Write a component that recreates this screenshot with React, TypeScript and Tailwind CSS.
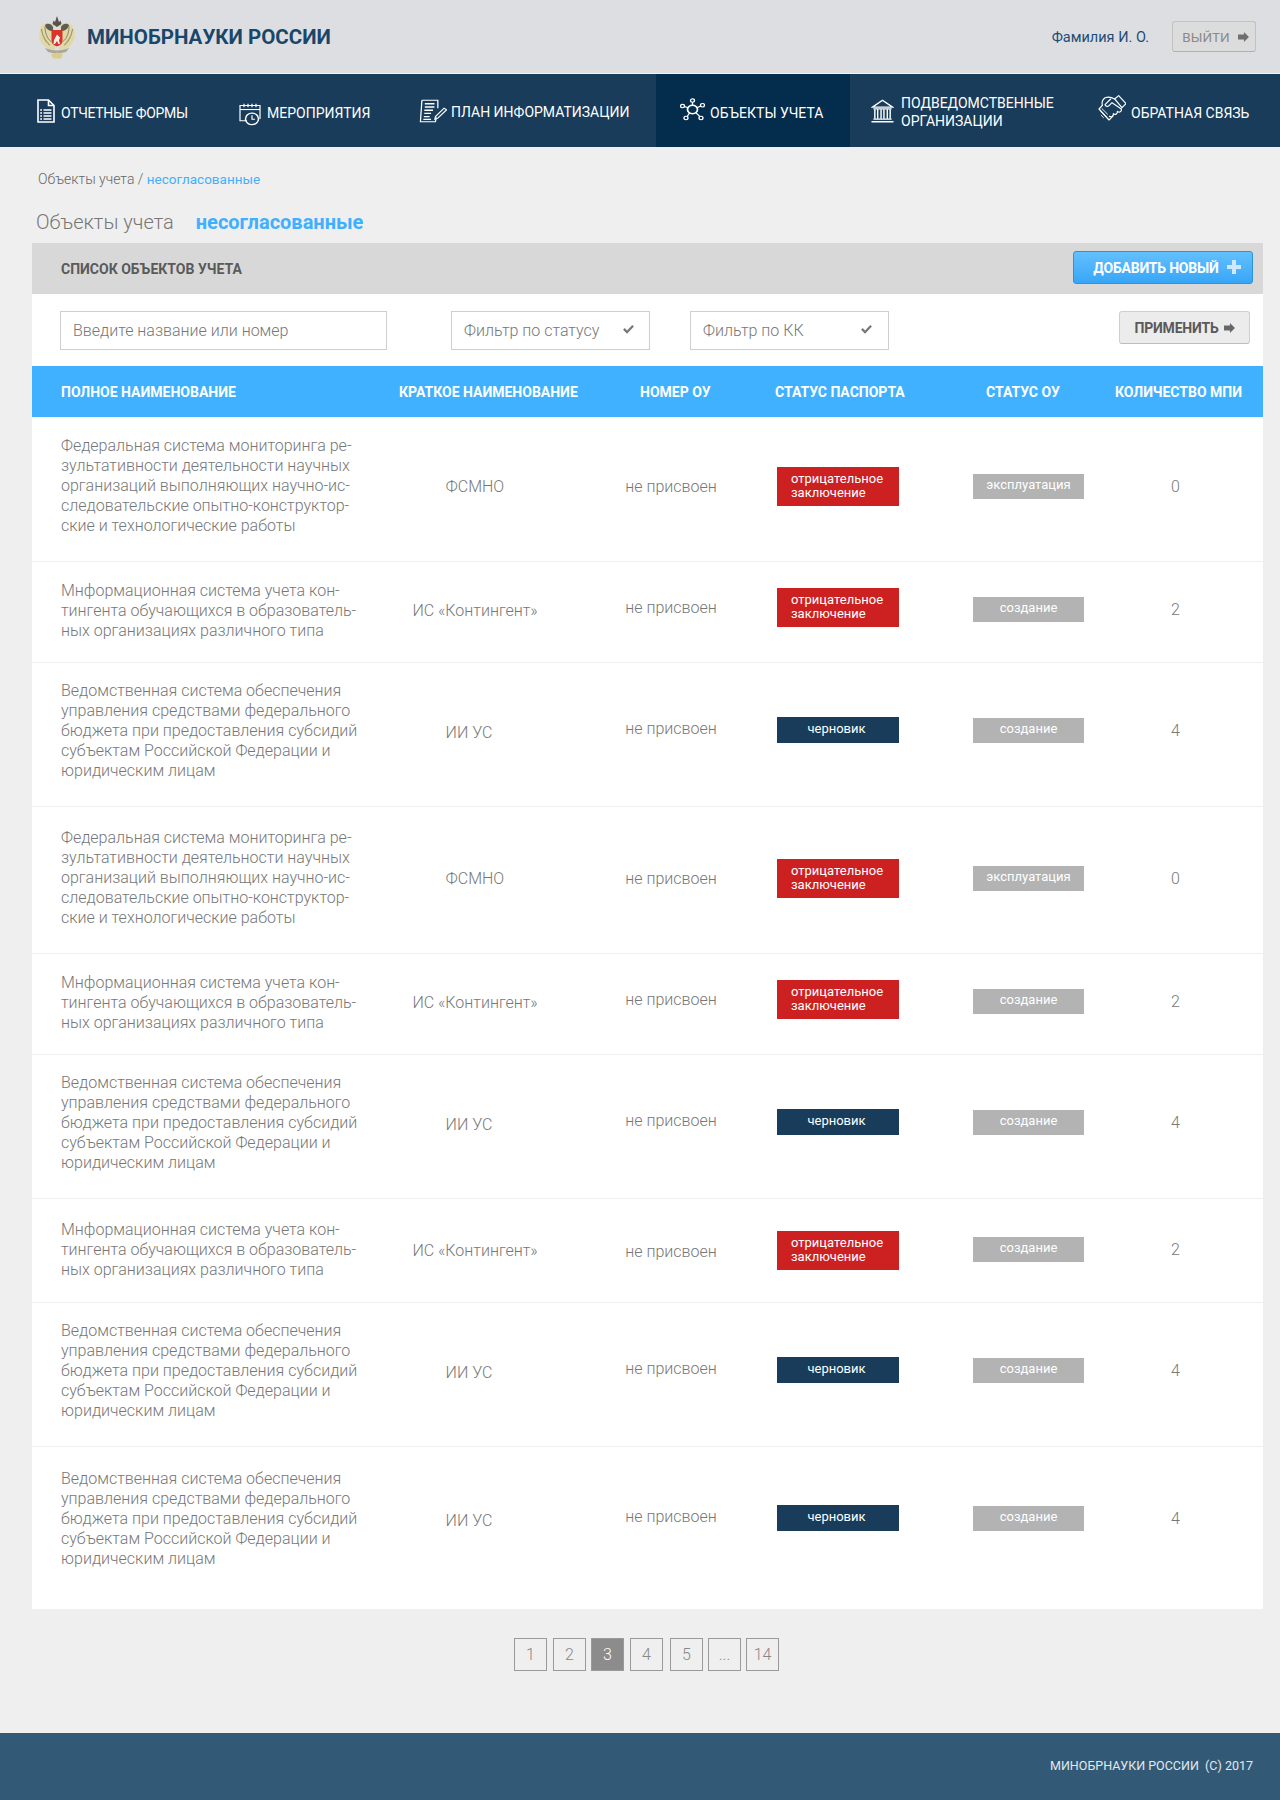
import React from 'react';

const fsmno = ['Федеральная система мониторинга ре-', 'зультативности деятельности научных', 'организаций выполняющих научно-ис-', 'следовательские опытно-конструктор-', 'ские и технологические работы'];
const kont = ['Мнформационная система учета кон-', 'тингента обучающихся в образователь-', 'ных организациях различного типа'];
const vedom = ['Ведомственная система обеспечения', 'управления средствами федерального', 'бюджета при предоставления субсидий', 'субъектам Российской Федерации и', 'юридическим лицам'];

// top offsets of every cell differ per row type, same as in the picture
const layouts = {
    long: { text: 'pt-[19px]', short: 'pt-[60px]', num: 'pt-[60px]', badge: 'pt-[50px]', status: 'pt-[57px]', qty: 'pt-[60px]' },
    mid: { text: 'pt-[19px]', short: 'pt-[39px]', num: 'pt-[36px]', badge: 'pt-[26px]', status: 'pt-[35px]', qty: 'pt-[38px]' },
    midLow: { text: 'pt-[21px]', short: 'pt-[42px]', num: 'pt-[43px]', badge: 'pt-[32px]', status: 'pt-[38px]', qty: 'pt-[41px]' },
    draft: { text: 'pt-[18px]', short: 'pt-[60px]', num: 'pt-[56px]', badge: 'pt-[54px]', status: 'pt-[55px]', qty: 'pt-[58px]' },
};

const rows = [
    { lines: fsmno, short: 'ФСМНО', status: 'эксплуатация', qty: 0, layout: layouts.long, box: 'h-[145px]', negative: true },
    { lines: kont, short: 'ИС «Контингент»', status: 'создание', qty: 2, layout: layouts.mid, box: 'h-[101px]', negative: true },
    { lines: vedom, short: 'ИИ УС', status: 'создание', qty: 4, layout: layouts.draft, box: 'h-[144px]', negative: false },
    { lines: fsmno, short: 'ФСМНО', status: 'эксплуатация', qty: 0, layout: layouts.long, box: 'h-[147px] pt-[2px]', negative: true },
    { lines: kont, short: 'ИС «Контингент»', status: 'создание', qty: 2, layout: layouts.mid, box: 'h-[101px]', negative: true },
    { lines: vedom, short: 'ИИ УС', status: 'создание', qty: 4, layout: layouts.draft, box: 'h-[144px]', negative: false },
    { lines: kont, short: 'ИС «Контингент»', status: 'создание', qty: 2, layout: layouts.midLow, box: 'h-[104px]', negative: true },
    { lines: vedom, short: 'ИИ УС', status: 'создание', qty: 4, layout: layouts.draft, box: 'h-[144px]', negative: false },
    { lines: vedom, short: 'ИИ УС', status: 'создание', qty: 4, layout: layouts.draft, box: 'h-[162px] pt-[4px]', negative: false, last: true },
];

const pages = [
    { label: '1', ml: '' },
    { label: '2', ml: 'ml-[6px]' },
    { label: '3', ml: 'ml-[5px]' },
    { label: '4', ml: 'ml-[6px]' },
    { label: '5', ml: 'ml-[7px]' },
    { label: '...', ml: 'ml-[5px]' },
    { label: '14', ml: 'ml-[5px]' },
];

const gridCols = 'grid grid-cols-[340px_206px_186px_196px_124px_179px]';

const Arrow = ({ className }: { className?: string }) => (
    <svg viewBox="0 0 12 11" className={className} fill="currentColor">
        <path d="M0 2.800h6.500V0L12 5.500 6.500 11V8.200H0z" />
    </svg>
);

const Check = () => (
    <svg viewBox="0 0 12 10" className="w-[11px] h-[9px] text-[#777]" fill="currentColor">
        <path d="M0 5.200l1.800-1.800 2.600 2.600L10.200 0 12 1.800 4.400 9.600z" />
    </svg>
);

const Emblem = () => (
    <svg viewBox="0 0 38 44" className="w-[38px] h-[44px]">
        <path d="M16 10C10 6 4 8 2 14c-2 7 0 14 5 18 3 2 7 3 10 3z" fill="#e0d8a8" />
        <path d="M22 10c6-4 12-2 14 4 2 7 0 14-5 18-3 2-7 3-10 3z" fill="#e0d8a8" />
        <path d="M3.500 14c1 6 3 12 8 16M7 11.500c0 6 2 12 6 15M34.500 14c-1 6-3 12-8 16M31 11.500c0 6-2 12-6 15" fill="none" stroke="#8c8868" strokeWidth="1" />
        <path d="M5 20c2 4 4 7 7 10M33 20c-2 4-4 7-7 10" fill="none" stroke="#b3a868" strokeWidth="1" />
        <path d="M15 12c-2-4-6-4-8-2 1 4 4 6 8 6zM23 12c2-4 6-4 8-2-1 4-4 6-8 6z" fill="#5f5d50" />
        <path d="M14.500 9l1-3.500 1.500 1.500L19 1l2 6 1.500-1.500 1 3.500L19 12z" fill="#57554c" />
        <path d="M13.500 15h11v11c0 3-3 4.500-5.500 5.500-2.500-1-5.500-2.500-5.500-5.500z" fill="#d8352a" />
        <path d="M16 25l3-5.500 3 3-1 3 1 3.500h-1.500l-1.500-3-2 3h-1.500z" fill="#f4efe3" />
        <path d="M7 33c4 1.500 8 2.500 12 2.500s8-1 12-2.500l-3 4c-3 1-6 1.200-9 1.200s-6-.2-9-1.200z" fill="#a9a69a" />
        <path d="M13 39l6-1.500 6 1.500-2 4.500h-8z" fill="#d9cd8e" />
    </svg>
);

const DocIcon = () => (
    <svg viewBox="0 0 18 24" className="w-[18px] h-[24px]" fill="none" stroke="white" strokeWidth="1.600">
        <path d="M1 1h10.500L17 6.500V23H1z" />
        <path d="M11.500 1v5.500H17" />
        <path d="M6.500 11H14.500M6.500 14H14.500M6.500 17H14.500M6.500 20H14.500M3.200 11H5M3.200 14H5M3.200 17H5M3.200 20H5" strokeWidth="1.300" />
    </svg>
);

const CalendarIcon = () => (
    <svg viewBox="0 0 22 27" preserveAspectRatio="none" className="w-[22px] h-[24px] mt-[6px]" fill="none" stroke="white" strokeWidth="1.200">
        <path d="M8 21H1V4h20v15" />
        <path d="M1 8.500h20" />
        <path d="M5 2v4M9 2v4M13 2v4M17 2v4" />
        <circle cx="13" cy="19" r="6.500" strokeWidth="1.500" />
        <path d="M13 15v4.500h3" />
    </svg>
);

const PlanIcon = () => (
    <svg viewBox="0 0 29 30" preserveAspectRatio="none" className="w-[28px] h-[24px]" fill="none" stroke="white" strokeWidth="1.300">
        <path d="M3 1.500h16.500v10M18 23l-1 5.500H1.500l1.500-27" />
        <path d="M6 6h10M6 10h10M5.500 14h9M5.500 18h7M5 22h6M4.500 25.500h8" strokeWidth="1.700" />
        <path d="M17 22l9-10.500 2.500 2L19.500 24l-3 1.500z" />
    </svg>
);

const NetworkIcon = () => (
    <svg viewBox="0 0 25 27" preserveAspectRatio="none" className="w-[25px] h-[23px] mb-[3px]" fill="none" stroke="white" strokeWidth="1.300">
        <circle cx="12.500" cy="13.500" r="5" strokeWidth="1.700" />
        <circle cx="12.500" cy="3" r="2" />
        <circle cx="2.500" cy="9.500" r="2" />
        <circle cx="22.500" cy="8.500" r="2" />
        <circle cx="6" cy="23.500" r="2" />
        <circle cx="21" cy="23.500" r="2" />
        <path d="M12.500 5v3.500M4.500 10l3.500 1.500M20.700 9.500L17 11.500M7 22l2.500-4.500M20 22l-4-4.500" />
    </svg>
);

const BankIcon = () => (
    <svg viewBox="0 0 24 28" preserveAspectRatio="none" className="w-[23px] h-[24px]" fill="none" stroke="white">
        <path d="M12 1.500L1.500 9.500h21z" strokeWidth="1.500" />
        <path d="M2.500 11.500h19M2.500 23.500h19M0.500 26.500h23" strokeWidth="1.700" />
        <path d="M4 12v11M7 12v11M10.500 12v11M13.500 12v11M17 12v11M20 12v11" strokeWidth="1.500" />
    </svg>
);

const HandshakeIcon = () => (
    <svg viewBox="0 0 84 78" className="w-[28px] h-[26px] mb-[6px]" fill="none" stroke="white" strokeWidth="3.500" strokeLinejoin="round" strokeLinecap="round">
        <path d="M50 12L62 2l22 24-12 12z" />
        <path d="M50 12C40 6 28 5 20 9c-7 6-9 14-7 22" />
        <path d="M38 12L21 29c3 7 9 6 13 2l8-8 28 19" />
        <path d="M13 31L3 42l30 33 11-11" />
        <path d="M70 42c2 8-6 12-12 7M58 49c1 8-6 12-12 7M46 56c1 8-6 12-12 8" />
        <path d="M9 49l24 0M15 57l20 0M22 65l10 0" strokeWidth="2.500" transform="rotate(45 20 56) translate(-6 2)" />
    </svg>
);

const App = () => {
    return (
        <div className="font-[Roboto,sans-serif] bg-[#efefef] min-h-[1800px] flex flex-col">
            {/* top bar */}
            <header className="h-[74px] bg-[#dddee2] border-b border-[#f4f4f4] flex items-center pl-[38px] pr-[24px]">
                <Emblem />
                <div className="ml-[11px] text-[20.500px] leading-[28px] font-bold text-[#19466b]">МИНОБРНАУКИ РОССИИ</div>
                <div className="ml-auto mt-[2px] text-[14.500px] text-[#1d4d75]">Фамилия И. О.</div>
                <button className="ml-[23px] w-[84px] h-[31px] pl-[3px] flex items-center justify-center gap-[8px] bg-[#dcdcdc] border border-[#c2c2c2] border-b-[#b0b0b0] rounded-[3px] text-[13.500px] text-[#8a8a8a]">
                    <span className="mt-[1px]">ВЫЙТИ</span>
                    <Arrow className="w-[11px] h-[10px] text-[#6e6e6e]" />
                </button>
            </header>

            {/* main menu */}
            <nav className="h-[73px] bg-[#183c5a] flex text-white text-[14px]">
                <a className="w-[214px] pl-[37px] flex items-center gap-[6px]"><DocIcon /><span className="mt-[5px] tracking-[-0.300px]">ОТЧЕТНЫЕ ФОРМЫ</span></a>
                <a className="w-[192px] pl-[25px] flex items-center gap-[6px]"><CalendarIcon /><span className="mt-[5px]">МЕРОПРИЯТИЯ</span></a>
                <a className="w-[250px] pl-[13px] flex items-center gap-[4px]"><PlanIcon /><span className="mt-[3px]">ПЛАН ИНФОРМАТИЗАЦИИ</span></a>
                <a className="w-[194px] pl-[24px] bg-[#042c4c] flex items-center gap-[5px]"><NetworkIcon /><span className="mt-[5px]">ОБЪЕКТЫ УЧЕТА</span></a>
                <a className="w-[230px] pl-[21px] flex items-center gap-[7px] leading-[18px]"><BankIcon /><span className="mt-[2px]">ПОДВЕДОМСТВЕННЫЕ<br />ОРГАНИЗАЦИИ</span></a>
                <a className="w-[200px] pl-[18px] flex items-center gap-[5px]">
                    <HandshakeIcon />
                    <span className="mt-[5px]">ОБРАТНАЯ СВЯЗЬ</span>
                </a>
            </nav>

            <div className="pt-[22px] pl-[38px] text-[14px] font-light leading-[20px] text-[#666]">
                Объекты учета / <span className="text-[#42b0fd] font-normal text-[13.500px]">несогласованные</span>
            </div>
            <div className="mt-[19px] pl-[36px] h-[28px] flex items-center leading-[28px]">
                <span className="text-[20px] font-light text-[#777]">Объекты учета</span>
                <span className="ml-[22px] text-[20px] font-bold text-[#3fb0ff]">несогласованные</span>
            </div>

            {/* list panel */}
            <section className="mt-[7px] ml-[32px] w-[1231px] bg-white">
                <div className="h-[51px] bg-[#d8d8d8] flex items-center justify-between pl-[29px] pr-[10px]">
                    <span className="text-[14px] font-bold text-[#5a5a5a] mt-[1px]">СПИСОК ОБЪЕКТОВ УЧЕТА</span>
                    <button className="w-[180px] h-[33px] mb-[3px] pl-[8px] flex items-center justify-center gap-[8px] rounded-[3px] border border-[#2f93da] bg-gradient-to-b from-[#62c0ff] to-[#36a6f6] text-white text-[14px] font-bold tracking-[-0.200px]">
                        <span className="mt-[2px]">ДОБАВИТЬ НОВЫЙ</span>
                        <svg viewBox="0 0 14 14" className="w-[14px] h-[14px]" fill="#cfe9fb"><path d="M5 0h4v5h5v4H9v5H5V9H0V5h5z" /></svg>
                    </button>
                </div>

                <div className="h-[72px] flex items-start pt-[17px] pl-[28px]">
                    <div className="w-[327px] h-[39px] border border-[#cfcfcf] flex items-center pl-[12px] text-[16px] font-light text-[#777]">Введите название или номер</div>
                    <div className="ml-[64px] w-[199px] h-[39px] border border-[#cfcfcf] flex items-center justify-between pl-[12px] pr-[15px] text-[16px] font-light text-[#777]">
                        Фильтр по статусу <span className="mb-[2px]"><Check /></span>
                    </div>
                    <div className="ml-[40px] w-[199px] h-[39px] border border-[#cfcfcf] flex items-center justify-between pl-[12px] pr-[16px] text-[16px] font-light text-[#777]">
                        Фильтр по КК <span className="mb-[2px]"><Check /></span>
                    </div>
                    <button className="ml-[230px] w-[131px] h-[33px] flex items-center justify-center gap-[5px] rounded-[3px] border border-[#cfcfcf] border-b-[#bdbdbd] bg-[#ececec] text-[14px] font-bold tracking-[-0.200px] text-[#5a5a5a]">
                        <span className="mt-[1px]">ПРИМЕНИТЬ</span>
                        <Arrow className="w-[11px] h-[10px] text-[#666]" />
                    </button>
                </div>

                <div className={`${gridCols} h-[51px] pt-[1px] items-center bg-[#3fb1ff] text-white text-[14px] font-bold`}>
                    <div className="pl-[29px]">ПОЛНОЕ НАИМЕНОВАНИЕ</div>
                    <div className="pl-[27px]">КРАТКОЕ НАИМЕНОВАНИЕ</div>
                    <div className="pl-[62px]">НОМЕР ОУ</div>
                    <div className="pl-[11px]">СТАТУС ПАСПОРТА</div>
                    <div className="pl-[26px] whitespace-nowrap">СТАТУС ОУ</div>
                    <div className="pl-[31px] whitespace-nowrap">КОЛИЧЕСТВО МПИ</div>
                </div>

                {rows.map((row, i) => (
                    <div key={i} className={`${gridCols} ${row.box} ${row.last ? '' : 'border-b border-[#efefef]'} text-[16px] font-light leading-[20px] text-[#777]`}>
                        <div className={`${row.layout.text} pl-[29px] whitespace-nowrap`}>
                            {row.lines.map((line) => <div key={line}>{line}</div>)}
                        </div>
                        <div className={`${row.layout.short} text-center ${row.short === 'ИИ УС' ? 'pr-[12px]' : ''}`}>{row.short}</div>
                        <div className={`${row.layout.num} text-center`}>не присвоен</div>
                        <div className={`${row.layout.badge} pl-[13px]`}>
                            {row.negative ? (
                                <div className="w-[122px] h-[39px] bg-[#cd2121] text-white font-normal text-[13px] leading-[14px] pl-[14px] pt-[5px]">отрицательное<br />заключение</div>
                            ) : (
                                <div className="w-[122px] h-[26px] bg-[#183c5a] text-white font-normal text-[13px] leading-[24px] text-center pr-[3px]">черновик</div>
                            )}
                        </div>
                        <div className={`${row.layout.status} pl-[13px]`}>
                            <div className="w-[111px] h-[25px] bg-[#b3b3b3] text-white font-normal text-[13px] leading-[22px] text-center">{row.status}</div>
                        </div>
                        <div className={`${row.layout.qty} pl-[4px] text-center`}>{row.qty}</div>
                    </div>
                ))}
            </section>

            {/* pagination */}
            <div className="mt-[29px] ml-[514px] flex text-[16px] font-light text-[#888]">
                {pages.map((p) => (
                    <span key={p.label} className={`${p.ml} w-[33px] h-[33px] border border-[#9a9a9a] flex items-center justify-center ${p.label === '3' ? 'bg-[#8c8c8c] text-white border-[#8c8c8c]' : ''}`}>{p.label}</span>
                ))}
            </div>

            <footer className="mt-[62px] h-[67px] bg-[#325a76] flex items-center justify-end pr-[27px] text-[12.500px] text-[#e4e9ed]">
                МИНОБРНАУКИ РОССИИ&nbsp;&nbsp;(C) 2017
            </footer>
        </div>
    );
};

export default App;
